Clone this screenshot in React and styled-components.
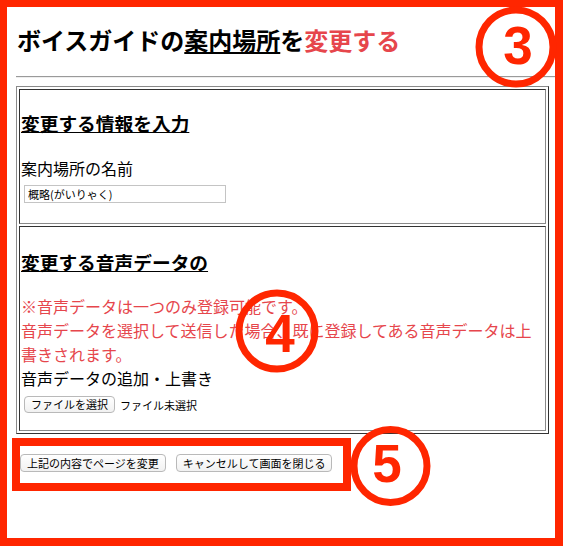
import styled, { createGlobalStyle } from "styled-components";

const GlobalStyle = createGlobalStyle`
  html, body {
    margin: 0;
    padding: 0;
    background: #fff;
  }
  body {
    font-family: "Noto Sans CJK JP", "Noto Sans", sans-serif;
    color: #000;
  }
`;

const Page = styled.div`
  position: relative;
  width: 563px;
  height: 546px;
`;

const Frame = styled.div`
  box-sizing: border-box;
  width: 100%;
  height: 100%;
  border: solid #ff2600;
  border-width: 7px 8px 8px 7px;
  padding-left: 9px;
  overflow: hidden;
`;

const Title = styled.h2`
  margin: 17px 0 0;
  padding-left: 1px;
  font-size: 24px;
  line-height: 32px;
  font-weight: 700;
`;

const Under = styled.span`
  text-decoration: underline;
`;

const Accent = styled.span`
  color: #e6464c;
`;

const Rule = styled.hr`
  height: 0;
  margin: 20px 0 8px;
  border: 0;
  border-top: 1px solid #9a9a9a;
  border-bottom: 1px solid #eee;
`;

const FormTable = styled.table`
  width: 533px;
  border-collapse: separate;
  border-spacing: 2px;
  border: 1px solid;
  border-color: #8a8a8a #333 #333 #8a8a8a;
  td {
    padding: 1px;
    border: 1px solid;
    border-color: #333 #8a8a8a #8a8a8a #333;
    vertical-align: top;
  }
`;

const SectionTitle = styled.h3`
  margin: ${(p) => p.$top}px 0 0;
  font-size: 18.72px;
  line-height: 26px;
  font-weight: 700;
  text-decoration: underline;
`;

const Label = styled.div`
  margin-top: ${(p) => p.$top}px;
  font-size: 16px;
  line-height: 24px;
`;

const Note = styled.p`
  margin: 19px 0 0;
  font-size: 16px;
  line-height: 24px;
  color: #e6464c;
`;

const TextInput = styled.input`
  display: block;
  box-sizing: border-box;
  width: 202px;
  height: 18px;
  margin: 5px 0 19px 3px;
  padding: 0 3px;
  border: 1px solid #c4c4c4;
  font-family: "Noto Sans CJK JP", sans-serif;
  font-size: 11px;
  color: #000;
`;

const FileRow = styled.div`
  display: flex;
  align-items: center;
  gap: 5px;
  margin: 6px 0 16px 3px;
  font-size: 11px;
`;

const Button = styled.button`
  box-sizing: border-box;
  height: ${(p) => p.$h || 18}px;
  padding: 0 6px;
  border: 1px solid #b9b9b9;
  border-radius: 4px;
  background: linear-gradient(#fff, #f1f1f1);
  font-family: "Noto Sans CJK JP", sans-serif;
  font-size: 11px;
  line-height: 1;
  color: #000;
`;

const ActionBar = styled.div`
  box-sizing: border-box;
  display: flex;
  gap: 10px;
  width: 339px;
  margin: 4px 0 0 -4px;
  padding: 8px 0 11px;
  border: 8px solid #ff2600;
`;

const Marks = styled.svg`
  position: absolute;
  top: 0;
  left: 0;
  pointer-events: none;
  circle {
    fill: none;
    stroke: #ff2600;
    stroke-width: 7;
  }
  text {
    fill: #ff2600;
    font-family: "Liberation Sans", Arial, sans-serif;
    font-weight: 700;
    font-size: 53px;
    text-anchor: middle;
  }
`;

export default function App() {
  return (
    <Page>
      <GlobalStyle />
      <Frame>
        <Title>
          ボイスガイドの<Under>案内場所</Under>を<Accent>変更する</Accent>
        </Title>
        <Rule />
        <FormTable>
          <tbody>
            <tr>
              <td>
                <SectionTitle $top={19}>変更する情報を入力</SectionTitle>
                <Label $top={20}>案内場所の名前</Label>
                <TextInput defaultValue="概略(がいりゃく)" />
              </td>
            </tr>
            <tr>
              <td>
                <SectionTitle $top={21}>変更する音声データの</SectionTitle>
                <Note>
                  ※音声データは一つのみ登録可能です。
                  <br />
                  音声データを選択して送信した場合、既に登録してある音声データは上書きされます。
                </Note>
                <Label $top={0}>音声データの追加・上書き</Label>
                <FileRow>
                  <Button $h={17}>ファイルを選択</Button>
                  <span>ファイル未選択</span>
                </FileRow>
              </td>
            </tr>
          </tbody>
        </FormTable>
        <ActionBar>
          <Button>上記の内容でページを変更</Button>
          <Button>キャンセルして画面を閉じる</Button>
        </ActionBar>
      </Frame>
      <Marks width="563" height="546" viewBox="0 0 563 546">
        <circle cx="516" cy="47" r="37" />
        <text x="518" y="64">3</text>
        <circle cx="277" cy="331" r="38" />
        <text x="280" y="352">4</text>
        <circle cx="390.5" cy="466" r="36.5" />
        <text x="387" y="482">5</text>
      </Marks>
    </Page>
  );
}
